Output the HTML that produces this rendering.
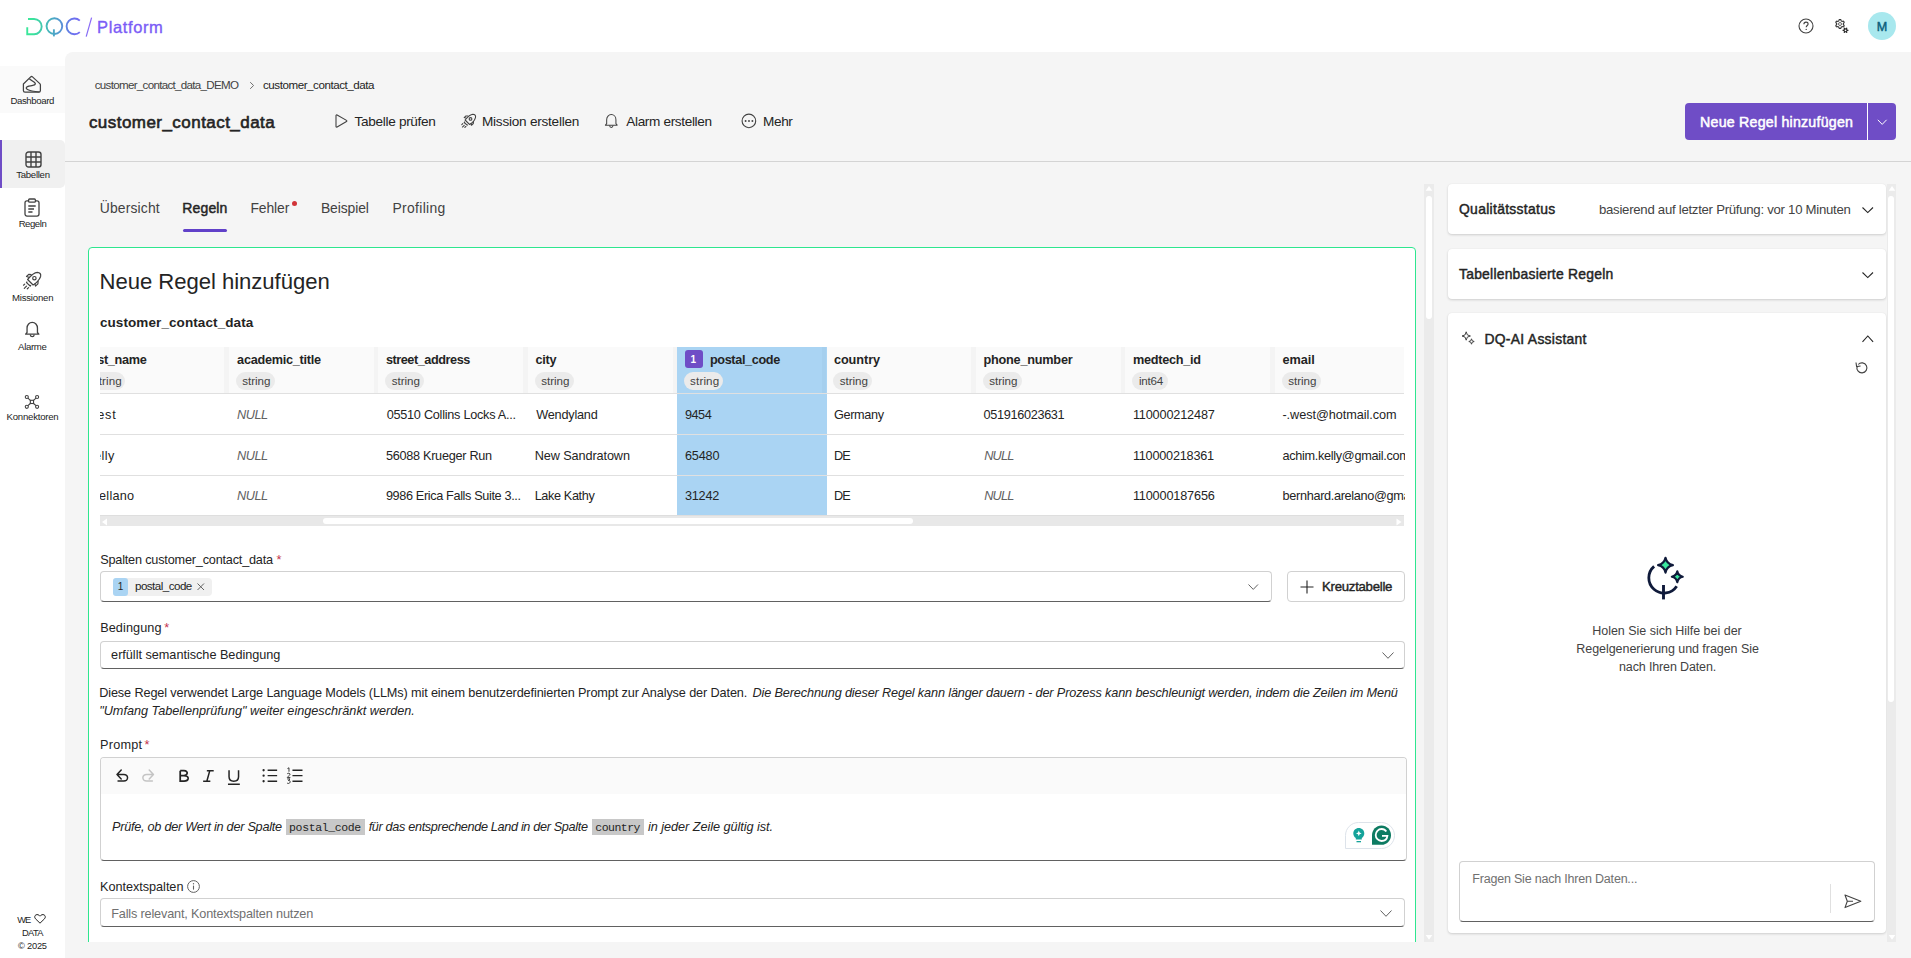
<!DOCTYPE html>
<html><head><meta charset="utf-8">
<style>
html,body{margin:0;padding:0;width:1911px;height:958px;overflow:hidden;background:#fff;font-family:"Liberation Sans", sans-serif;}
.t{position:absolute;white-space:nowrap;line-height:1;}
svg{overflow:visible}
</style></head><body>
<div style="position:absolute;left:0px;top:0px;width:1911px;height:52px;background:#fff;"></div>
<svg style="position:absolute;left:26px;top:17px;" width="140" height="22" viewBox="0 0 140 22" fill="none">
<defs><linearGradient id="lg" x1="0" y1="0" x2="70" y2="0" gradientUnits="userSpaceOnUse">
<stop offset="0.08" stop-color="#3ae69a"/><stop offset="0.4" stop-color="#4ca6c6"/><stop offset="0.68" stop-color="#6b70ef"/><stop offset="0.92" stop-color="#8a69f6"/></linearGradient></defs>
<g stroke="url(#lg)" stroke-width="1.9" fill="none">
<path d="M2 1.95 H8.05 A7.62 7.62 0 0 1 8.05 17.2 H1.25 V10.2"/>
<circle cx="28.4" cy="9.1" r="7.85"/>
<path d="M27.9 12.3 V19.4"/>
<path d="M53.8 3.6 A7.85 7.85 0 1 0 53.8 15.1"/>
<path d="M65.6 0.6 L60.2 19.7" stroke-width="1.2"/>
</g></svg>
<svg style="position:absolute;left:1798px;top:18px;" width="16" height="16" viewBox="0 0 16 16" fill="none"><circle cx="8" cy="8" r="7" stroke="#424242" stroke-width="1.1"/><path d="M5.9 6.2 C5.9 4.9 6.9 4.1 8 4.1 C9.2 4.1 10.1 4.9 10.1 6 C10.1 7.4 8.2 7.6 8.2 9.3" stroke="#424242" stroke-width="1.1"/><circle cx="8.2" cy="11.4" r="0.7" fill="#424242"/></svg>
<svg style="position:absolute;left:1834px;top:17.8px;" width="16" height="17" viewBox="0 0 16 17" fill="none"><path d="M9.30 6.00 L9.30 6.09 L9.30 6.17 L9.31 6.26 L9.31 6.35 L9.33 6.44 L9.36 6.53 L9.42 6.63 L9.50 6.74 L9.62 6.87 L9.77 7.01 L9.91 7.16 L10.01 7.30 L10.08 7.44 L10.11 7.58 L10.10 7.70 L10.08 7.82 L10.05 7.93 L10.00 8.04 L9.95 8.15 L9.90 8.25 L9.84 8.35 L9.77 8.45 L9.70 8.54 L9.61 8.63 L9.52 8.70 L9.42 8.77 L9.29 8.81 L9.14 8.82 L8.96 8.80 L8.76 8.76 L8.56 8.70 L8.40 8.66 L8.26 8.64 L8.14 8.64 L8.04 8.66 L7.96 8.70 L7.88 8.73 L7.80 8.77 L7.73 8.81 L7.65 8.86 L7.58 8.90 L7.50 8.95 L7.43 8.99 L7.36 9.04 L7.29 9.10 L7.22 9.18 L7.16 9.27 L7.11 9.40 L7.06 9.57 L7.01 9.77 L6.95 9.96 L6.88 10.13 L6.79 10.25 L6.69 10.34 L6.58 10.40 L6.47 10.44 L6.35 10.47 L6.24 10.49 L6.12 10.50 L6.00 10.50 L5.88 10.50 L5.76 10.49 L5.65 10.47 L5.53 10.44 L5.42 10.40 L5.31 10.34 L5.21 10.25 L5.12 10.13 L5.05 9.96 L4.99 9.77 L4.94 9.57 L4.89 9.40 L4.84 9.27 L4.78 9.18 L4.71 9.10 L4.64 9.04 L4.57 8.99 L4.50 8.95 L4.42 8.90 L4.35 8.86 L4.27 8.81 L4.20 8.77 L4.12 8.73 L4.04 8.70 L3.96 8.66 L3.86 8.64 L3.74 8.64 L3.60 8.66 L3.44 8.70 L3.24 8.76 L3.04 8.80 L2.86 8.82 L2.71 8.81 L2.58 8.77 L2.48 8.70 L2.39 8.63 L2.30 8.54 L2.23 8.45 L2.16 8.35 L2.10 8.25 L2.05 8.15 L2.00 8.04 L1.95 7.93 L1.92 7.82 L1.90 7.70 L1.89 7.58 L1.92 7.44 L1.99 7.30 L2.09 7.16 L2.23 7.01 L2.38 6.87 L2.50 6.74 L2.58 6.63 L2.64 6.53 L2.67 6.44 L2.69 6.35 L2.69 6.26 L2.70 6.17 L2.70 6.09 L2.70 6.00 L2.70 5.91 L2.70 5.83 L2.69 5.74 L2.69 5.65 L2.67 5.56 L2.64 5.47 L2.58 5.37 L2.50 5.26 L2.38 5.13 L2.23 4.99 L2.09 4.84 L1.99 4.70 L1.92 4.56 L1.89 4.42 L1.90 4.30 L1.92 4.18 L1.95 4.07 L2.00 3.96 L2.05 3.85 L2.10 3.75 L2.16 3.65 L2.23 3.55 L2.30 3.46 L2.39 3.37 L2.48 3.30 L2.58 3.23 L2.71 3.19 L2.86 3.18 L3.04 3.20 L3.24 3.24 L3.44 3.30 L3.60 3.34 L3.74 3.36 L3.86 3.36 L3.96 3.34 L4.04 3.30 L4.12 3.27 L4.20 3.23 L4.27 3.19 L4.35 3.14 L4.42 3.10 L4.50 3.05 L4.57 3.01 L4.64 2.96 L4.71 2.90 L4.78 2.82 L4.84 2.73 L4.89 2.60 L4.94 2.43 L4.99 2.23 L5.05 2.04 L5.12 1.87 L5.21 1.75 L5.31 1.66 L5.42 1.60 L5.53 1.56 L5.65 1.53 L5.76 1.51 L5.88 1.50 L6.00 1.50 L6.12 1.50 L6.24 1.51 L6.35 1.53 L6.47 1.56 L6.58 1.60 L6.69 1.66 L6.79 1.75 L6.88 1.87 L6.95 2.04 L7.01 2.23 L7.06 2.43 L7.11 2.60 L7.16 2.73 L7.22 2.82 L7.29 2.90 L7.36 2.96 L7.43 3.01 L7.50 3.05 L7.58 3.10 L7.65 3.14 L7.73 3.19 L7.80 3.23 L7.88 3.27 L7.96 3.30 L8.04 3.34 L8.14 3.36 L8.26 3.36 L8.40 3.34 L8.56 3.30 L8.76 3.24 L8.96 3.20 L9.14 3.18 L9.29 3.19 L9.42 3.23 L9.52 3.30 L9.61 3.37 L9.70 3.46 L9.77 3.55 L9.84 3.65 L9.90 3.75 L9.95 3.85 L10.00 3.96 L10.05 4.07 L10.08 4.18 L10.10 4.30 L10.11 4.42 L10.08 4.56 L10.01 4.70 L9.91 4.84 L9.77 4.99 L9.62 5.13 L9.50 5.26 L9.42 5.37 L9.36 5.47 L9.33 5.56 L9.31 5.65 L9.31 5.74 L9.30 5.83 L9.30 5.91 Z" stroke="#333" stroke-width="1.15" stroke-linejoin="round"/><circle cx="6" cy="6" r="1.5" stroke="#555" stroke-width="0.9"/><path d="M14.50 12.30 L14.50 12.38 L14.49 12.46 L14.48 12.53 L14.47 12.61 L14.44 12.69 L14.40 12.76 L14.34 12.83 L14.24 12.88 L14.10 12.92 L13.91 12.95 L13.73 12.96 L13.59 12.98 L13.49 13.00 L13.42 13.04 L13.38 13.08 L13.34 13.12 L13.31 13.16 L13.28 13.21 L13.26 13.25 L13.23 13.30 L13.21 13.35 L13.18 13.39 L13.15 13.44 L13.13 13.48 L13.11 13.54 L13.10 13.60 L13.10 13.67 L13.13 13.77 L13.19 13.90 L13.27 14.07 L13.34 14.24 L13.38 14.38 L13.38 14.50 L13.35 14.59 L13.31 14.66 L13.25 14.71 L13.19 14.77 L13.13 14.81 L13.07 14.86 L13.00 14.90 L12.93 14.94 L12.86 14.97 L12.79 15.00 L12.71 15.03 L12.64 15.04 L12.55 15.05 L12.46 15.02 L12.37 14.97 L12.26 14.86 L12.15 14.71 L12.04 14.57 L11.96 14.45 L11.88 14.37 L11.82 14.33 L11.77 14.31 L11.71 14.30 L11.66 14.30 L11.60 14.30 L11.55 14.30 L11.50 14.30 L11.45 14.30 L11.40 14.30 L11.34 14.30 L11.29 14.30 L11.23 14.31 L11.18 14.33 L11.12 14.37 L11.04 14.45 L10.96 14.57 L10.85 14.71 L10.74 14.86 L10.63 14.97 L10.54 15.02 L10.45 15.05 L10.36 15.04 L10.29 15.03 L10.21 15.00 L10.14 14.97 L10.07 14.94 L10.00 14.90 L9.93 14.86 L9.87 14.81 L9.81 14.77 L9.75 14.71 L9.69 14.66 L9.65 14.59 L9.62 14.50 L9.62 14.38 L9.66 14.24 L9.73 14.07 L9.81 13.90 L9.87 13.77 L9.90 13.67 L9.90 13.60 L9.89 13.54 L9.87 13.48 L9.85 13.44 L9.82 13.39 L9.79 13.35 L9.77 13.30 L9.74 13.25 L9.72 13.21 L9.69 13.16 L9.66 13.12 L9.62 13.08 L9.58 13.04 L9.51 13.00 L9.41 12.98 L9.27 12.96 L9.09 12.95 L8.90 12.92 L8.76 12.88 L8.66 12.83 L8.60 12.76 L8.56 12.69 L8.53 12.61 L8.52 12.53 L8.51 12.46 L8.50 12.38 L8.50 12.30 L8.50 12.22 L8.51 12.14 L8.52 12.07 L8.53 11.99 L8.56 11.91 L8.60 11.84 L8.66 11.77 L8.76 11.72 L8.90 11.68 L9.09 11.65 L9.27 11.64 L9.41 11.62 L9.51 11.60 L9.58 11.56 L9.62 11.52 L9.66 11.48 L9.69 11.44 L9.72 11.39 L9.74 11.35 L9.77 11.30 L9.79 11.25 L9.82 11.21 L9.85 11.16 L9.87 11.12 L9.89 11.06 L9.90 11.00 L9.90 10.93 L9.87 10.83 L9.81 10.70 L9.73 10.53 L9.66 10.36 L9.62 10.22 L9.62 10.10 L9.65 10.01 L9.69 9.94 L9.75 9.89 L9.81 9.83 L9.87 9.79 L9.93 9.74 L10.00 9.70 L10.07 9.66 L10.14 9.63 L10.21 9.60 L10.29 9.57 L10.36 9.56 L10.45 9.55 L10.54 9.58 L10.63 9.63 L10.74 9.74 L10.85 9.89 L10.96 10.03 L11.04 10.15 L11.12 10.23 L11.18 10.27 L11.23 10.29 L11.29 10.30 L11.34 10.30 L11.40 10.30 L11.45 10.30 L11.50 10.30 L11.55 10.30 L11.60 10.30 L11.66 10.30 L11.71 10.30 L11.77 10.29 L11.82 10.27 L11.88 10.23 L11.96 10.15 L12.04 10.03 L12.15 9.89 L12.26 9.74 L12.37 9.63 L12.46 9.58 L12.55 9.55 L12.64 9.56 L12.71 9.57 L12.79 9.60 L12.86 9.63 L12.93 9.66 L13.00 9.70 L13.07 9.74 L13.13 9.79 L13.19 9.83 L13.25 9.89 L13.31 9.94 L13.35 10.01 L13.38 10.10 L13.38 10.22 L13.34 10.36 L13.27 10.53 L13.19 10.70 L13.13 10.83 L13.10 10.93 L13.10 11.00 L13.11 11.06 L13.13 11.12 L13.15 11.16 L13.18 11.21 L13.21 11.25 L13.23 11.30 L13.26 11.35 L13.28 11.39 L13.31 11.44 L13.34 11.48 L13.38 11.52 L13.42 11.56 L13.49 11.60 L13.59 11.62 L13.73 11.64 L13.91 11.65 L14.10 11.68 L14.24 11.72 L14.34 11.77 L14.40 11.84 L14.44 11.91 L14.47 11.99 L14.48 12.07 L14.49 12.14 L14.50 12.22 Z" fill="#2a2a2a"/><circle cx="11.5" cy="12.3" r="0.85" fill="#fff"/></svg>
<svg style="position:absolute;left:1868px;top:12px;" width="28" height="28" viewBox="0 0 28 28" fill="none"><circle cx="14" cy="14" r="14" fill="#a8e8ee"/></svg>
<div style="position:absolute;left:0px;top:52px;width:65px;height:906px;background:#fff;"></div>
<div style="position:absolute;left:0px;top:66px;width:65px;height:47px;background:#fafafa;"></div>
<div style="position:absolute;left:0px;top:140px;width:65px;height:47.5px;background:#f0f0f0;border-radius:0 5px 5px 0"></div>
<div style="position:absolute;left:0px;top:140px;width:2px;height:47.5px;background:#6f4dc6;"></div>
<svg style="position:absolute;left:22px;top:75px;" width="20" height="19" viewBox="0 0 20 19" fill="none"><path d="M1.4 9 L8.7 1.9 Q9.6 1.1 10.5 1.9 L17.8 8.6 Q18.4 9.2 18.4 10 V15.6 Q18.4 17.2 16.8 17.2 H3 Q1.4 17.2 1.4 15.6 Z" stroke="#424242" stroke-width="1.25" stroke-linejoin="round"/><path d="M7.4 3.8 C9 5.5 11.5 6.5 13 8 C13.8 8.9 13 10 11.5 10.2 C9 10.6 6 11 4.8 12 C3.8 12.8 4.2 13.8 5.5 14.5 C8 16 13 16.6 17.6 17" stroke="#424242" stroke-width="1.25"/></svg>
<svg style="position:absolute;left:24.5px;top:150.5px;" width="17" height="17" viewBox="0 0 17 17" fill="none"><rect x="1" y="1" width="15" height="15" rx="2.5" stroke="#424242" stroke-width="1.4"/><path d="M6 1 V16 M11 1 V16 M1 6 H16 M1 11 H16" stroke="#424242" stroke-width="1.4"/></svg>
<svg style="position:absolute;left:24px;top:198px;" width="16" height="19" viewBox="0 0 16 19" fill="none"><rect x="1" y="2.8" width="14" height="15.3" rx="2" stroke="#424242" stroke-width="1.3"/><rect x="4.6" y="1" width="6.8" height="3.2" rx="1" stroke="#424242" stroke-width="1.3" fill="#fff"/><path d="M4.3 8 H11.7 M4.3 11 H10 M4.3 14 H8.5" stroke="#424242" stroke-width="1.3"/></svg>
<svg style="position:absolute;left:20px;top:267px;" width="25" height="25" viewBox="0 0 25 25" fill="none"><path d="M7.6 12.5 L13.1 18 C15.5 16.8 19.5 13 20.6 9.5 C21.2 7 19.8 5.4 17.3 5.3 C14.5 5.4 10.2 9.3 7.6 12.5 Z" stroke="#424242" stroke-width="1.2" stroke-linejoin="round"/><circle cx="14.4" cy="11.2" r="1.7" stroke="#424242" stroke-width="1.2"/><path d="M9.3 10.4 L6.5 9.5 L8.7 7.4 L11.6 7.6 M14.8 16.4 L15.5 19.1 L17.9 16.9 L18.1 14" stroke="#424242" stroke-width="1.2" stroke-linejoin="round"/><path d="M7.2 14.6 L6.5 15.6 L10.2 19 L11 18.2" stroke="#424242" stroke-width="1.2" stroke-linejoin="round"/><path d="M3.5 18.2 L4.7 17.1 M4.3 21.3 L6.5 19.1 M7.3 21.8 L8.6 20.6" stroke="#424242" stroke-width="1.2" stroke-linecap="round"/></svg>
<svg style="position:absolute;left:23.8px;top:321px;" width="16.5" height="17" viewBox="0 0 16.4 17" fill="none"><path d="M3 11.5 V7 C3 3.8 5.3 1.3 8.2 1.3 C11.1 1.3 13.4 3.8 13.4 7 V11.5 L14.8 13.2 H1.6 Z" stroke="#424242" stroke-width="1.3" stroke-linejoin="round"/><path d="M6.2 13.6 C6.4 15 7.2 15.7 8.2 15.7 C9.2 15.7 10 15 10.2 13.6" stroke="#424242" stroke-width="1.3"/></svg>
<svg style="position:absolute;left:20px;top:390px;" width="24" height="22" viewBox="0 0 24 22" fill="none"><circle cx="6.8" cy="7" r="1.55" stroke="#424242" stroke-width="1.1"/><circle cx="17.1" cy="7" r="1.55" stroke="#424242" stroke-width="1.1"/><circle cx="6.8" cy="16.8" r="1.55" stroke="#424242" stroke-width="1.1"/><circle cx="17.1" cy="16.8" r="1.55" stroke="#424242" stroke-width="1.1"/><rect x="10.35" y="10.3" width="3.2" height="3.2" stroke="#424242" stroke-width="1.1"/><path d="M7.9 8.1 L10.35 10.3 M16 8.1 L13.55 10.3 M7.9 15.7 L10.35 13.5 M16 15.7 L13.55 13.5" stroke="#424242" stroke-width="1.1"/></svg>
<svg style="position:absolute;left:33.5px;top:914px;" width="12" height="10" viewBox="0 0 12 10" fill="none"><path d="M6 9.2 L1.5 4.8 C0.3 3.6 0.5 1.6 1.9 0.9 C3.3 0.2 4.9 0.7 6 2.2 C7.1 0.7 8.7 0.2 10.1 0.9 C11.5 1.6 11.7 3.6 10.5 4.8 Z" stroke="#242424" stroke-width="1"/></svg>
<div style="position:absolute;left:65px;top:52px;width:1846px;height:906px;background:#f5f5f5;border-top-left-radius:8px"></div>
<svg style="position:absolute;left:249px;top:81px;" width="6" height="9" viewBox="0 0 6 9" fill="none"><path d="M1.2 1.2 L4.6 4.5 L1.2 7.8" stroke="#707070" stroke-width="1"/></svg>
<svg style="position:absolute;left:334px;top:114px;" width="14" height="14" viewBox="0 0 14 14" fill="none"><path d="M2 1.6 V12.4 C2 13 2.6 13.3 3.1 13 L12.5 7.6 C13 7.3 13 6.7 12.5 6.4 L3.1 1 C2.6 0.7 2 1 2 1.6 Z" stroke="#424242" stroke-width="1.1"/></svg>
<svg style="position:absolute;left:458.8px;top:110px;" width="20" height="20" viewBox="0 0 25 25" fill="none"><path d="M7.6 12.5 L13.1 18 C15.5 16.8 19.5 13 20.6 9.5 C21.2 7 19.8 5.4 17.3 5.3 C14.5 5.4 10.2 9.3 7.6 12.5 Z" stroke="#424242" stroke-width="1.35" stroke-linejoin="round"/><circle cx="14.4" cy="11.2" r="1.7" stroke="#424242" stroke-width="1.35"/><path d="M9.3 10.4 L6.5 9.5 L8.7 7.4 L11.6 7.6 M14.8 16.4 L15.5 19.1 L17.9 16.9 L18.1 14" stroke="#424242" stroke-width="1.35" stroke-linejoin="round"/><path d="M7.2 14.6 L6.5 15.6 L10.2 19 L11 18.2" stroke="#424242" stroke-width="1.35" stroke-linejoin="round"/><path d="M3.5 18.2 L4.7 17.1 M4.3 21.3 L6.5 19.1 M7.3 21.8 L8.6 20.6" stroke="#424242" stroke-width="1.35" stroke-linecap="round"/></svg>
<svg style="position:absolute;left:603.6px;top:112.6px;" width="14.6" height="16" viewBox="0 0 16.4 17" fill="none"><path d="M3 11.5 V7 C3 3.8 5.3 1.3 8.2 1.3 C11.1 1.3 13.4 3.8 13.4 7 V11.5 L14.8 13.2 H1.6 Z" stroke="#424242" stroke-width="1.15" stroke-linejoin="round"/><path d="M6.2 13.6 C6.4 15 7.2 15.7 8.2 15.7 C9.2 15.7 10 15 10.2 13.6" stroke="#424242" stroke-width="1.15"/></svg>
<svg style="position:absolute;left:741px;top:113px;" width="16" height="16" viewBox="0 0 16 16" fill="none"><circle cx="7.9" cy="7.9" r="6.8" stroke="#424242" stroke-width="1.1"/><circle cx="4.6" cy="8" r="0.95" fill="#424242"/><circle cx="8" cy="8" r="0.95" fill="#424242"/><circle cx="11.4" cy="8" r="0.95" fill="#424242"/></svg>
<div style="position:absolute;left:1685px;top:103px;width:211px;height:37px;background:#6f4dc6;border-radius:4px"></div>
<div style="position:absolute;left:1867px;top:103px;width:1px;height:37px;background:#fff;"></div>
<svg style="position:absolute;left:1877px;top:119px;" width="11" height="7" viewBox="0 0 11 7" fill="none"><path d="M0.8 0.8 L5.2 5.4 L9.6 0.8" stroke="#fff" stroke-width="1"/></svg>
<div style="position:absolute;left:65px;top:161px;width:1846px;height:1px;background:#d4d4d4;"></div>
<div style="position:absolute;left:291.8px;top:200.8px;width:5.4px;height:5.4px;border-radius:50%;background:#d13438"></div>
<div style="position:absolute;left:182.8px;top:229px;width:44.2px;height:3px;background:#6141c9;border-radius:2px"></div>
<div style="position:absolute;left:88px;top:247px;width:1328px;height:695px;overflow:hidden;z-index:1"><div style="position:absolute;left:0;top:0;width:1328px;height:760px;box-sizing:border-box;border:1px solid #2ee68f;border-radius:4px;background:#fff"></div></div>
<div style="position:absolute;left:100px;top:347px;width:1304px;height:180px;overflow:hidden;z-index:2"><div style="position:absolute;left:0px;top:0px;width:1304px;height:46px;background:#fafafa;"></div><div style="position:absolute;left:577px;top:0px;width:150px;height:168.5px;background:#aad4f3;"></div><div style="position:absolute;left:124.30000000000001px;top:0px;width:4.5px;height:46px;background:#f4f4f4;"></div><div style="position:absolute;left:273.7px;top:0px;width:4.5px;height:46px;background:#f4f4f4;"></div><div style="position:absolute;left:423.1px;top:0px;width:4.5px;height:46px;background:#f4f4f4;"></div><div style="position:absolute;left:572.5px;top:0px;width:4.5px;height:46px;background:#f4f4f4;"></div><div style="position:absolute;left:721.7px;top:0px;width:4.5px;height:46px;background:#a5cfee;"></div><div style="position:absolute;left:871.1px;top:0px;width:4.5px;height:46px;background:#f4f4f4;"></div><div style="position:absolute;left:1020.7px;top:0px;width:4.5px;height:46px;background:#f4f4f4;"></div><div style="position:absolute;left:1170.1px;top:0px;width:4.5px;height:46px;background:#f4f4f4;"></div><div style="position:absolute;left:0px;top:46px;width:1304px;height:1px;background:#e0e0e0;"></div><div style="position:absolute;left:0px;top:87.19999999999999px;width:1304px;height:1px;background:#e0e0e0;"></div><div style="position:absolute;left:0px;top:128px;width:1304px;height:1px;background:#e0e0e0;"></div><div style="position:absolute;left:0px;top:168.29999999999995px;width:1304px;height:11px;background:#e8e8e8;"></div><div style="position:absolute;left:0px;top:168.29999999999995px;width:1304px;height:1px;background:#dedede;"></div><div style="position:absolute;left:222.8px;top:171.29999999999995px;width:590px;height:6px;background:#fff;border-radius:3px"></div><svg style="position:absolute;left:1px;top:171px" width="8" height="8"><path d="M6 0.5 V7.5 L1 4 Z" fill="#fff"/></svg><svg style="position:absolute;left:1295px;top:171px" width="8" height="8"><path d="M1.5 0.5 V7.5 L6.5 4 Z" fill="#fff"/></svg><div style="position:absolute;left:-13.599999999999994px;top:25.19999999999999px;width:39px;height:17.5px;background:#ebebeb;border-radius:9px"></div><div style="position:absolute;left:136.0px;top:25.19999999999999px;width:39px;height:17.5px;background:#ebebeb;border-radius:9px"></div><div style="position:absolute;left:285.4px;top:25.19999999999999px;width:39px;height:17.5px;background:#ebebeb;border-radius:9px"></div><div style="position:absolute;left:434.80000000000007px;top:25.19999999999999px;width:39px;height:17.5px;background:#ebebeb;border-radius:9px"></div><div style="position:absolute;left:584.2px;top:25.19999999999999px;width:39px;height:17.5px;background:#ebebeb;border-radius:9px"></div><div style="position:absolute;left:733.4000000000001px;top:25.19999999999999px;width:39px;height:17.5px;background:#ebebeb;border-radius:9px"></div><div style="position:absolute;left:882.8000000000001px;top:25.19999999999999px;width:39px;height:17.5px;background:#ebebeb;border-radius:9px"></div><div style="position:absolute;left:1032.4px;top:25.19999999999999px;width:35.4px;height:17.5px;background:#ebebeb;border-radius:9px"></div><div style="position:absolute;left:1181.8px;top:25.19999999999999px;width:39px;height:17.5px;background:#ebebeb;border-radius:9px"></div><div style="position:absolute;left:584.9px;top:3px;width:18px;height:18px;background:#6f4dc6;border-radius:3px"></div></div>
<div style="position:absolute;left:100px;top:571.2px;width:1172px;height:30.5px;box-sizing:border-box;border:1px solid #d1d1d1;border-bottom-color:#616161;border-radius:4px;background:#fff;z-index:2;"></div>
<div style="position:absolute;left:112.8px;top:578.3px;width:98.8px;height:17.3px;background:#f0f0f0;border-radius:4px;z-index:3"></div>
<div style="position:absolute;left:112.8px;top:578.3px;width:15px;height:17.3px;background:#aad4f3;border-radius:3px;z-index:3"></div>
<svg style="position:absolute;left:197px;top:583px;z-index:4" width="8" height="8" viewBox="0 0 8 8" fill="none"><path d="M0.5 0.5 L7 7 M7 0.5 L0.5 7" stroke="#616161" stroke-width="1"/></svg>
<svg style="position:absolute;left:1248.2px;top:584px;z-index:3" width="10.5" height="6.6" viewBox="0 0 10.5 6.6" fill="none"><path d="M0.5 0.5 L5.25 5.3999999999999995 L10.0 0.5" stroke="#616161" stroke-width="1"/></svg>
<div style="position:absolute;left:1287px;top:571px;width:118px;height:30.5px;box-sizing:border-box;border:1px solid #d1d1d1;border-bottom-color:#d1d1d1;border-radius:4px;background:#fff;z-index:2;"></div>
<svg style="position:absolute;left:1300px;top:580px;z-index:3" width="14" height="14" viewBox="0 0 14 14" fill="none"><path d="M7 0.5 V13.5 M0.5 7 H13.5" stroke="#242424" stroke-width="1.1"/></svg>
<div style="position:absolute;left:100px;top:640.5px;width:1305px;height:28px;box-sizing:border-box;border:1px solid #d1d1d1;border-bottom-color:#616161;border-radius:4px;background:#fff;z-index:2;"></div>
<svg style="position:absolute;left:1381.5px;top:651.5px;z-index:3" width="12" height="7.5" viewBox="0 0 12 7.5" fill="none"><path d="M0.5 0.5 L6.0 6.3 L11.5 0.5" stroke="#616161" stroke-width="1"/></svg>
<div style="position:absolute;left:100px;top:757px;width:1306.5px;height:103.5px;box-sizing:border-box;border:1px solid #d1d1d1;border-bottom-color:#616161;border-radius:4px;background:#fff;z-index:2;"></div>
<div style="position:absolute;left:101px;top:758px;width:1304.5px;height:36px;background:#fafafa;border-radius:3px 3px 0 0;z-index:3"></div>
<svg style="position:absolute;left:108px;top:762px;z-index:4" width="202" height="28" viewBox="0 0 202 28" fill="none">
<path d="M8.99 12.47 L13.21 7.93 M8.99 12.47 L13.21 16.91 M8.99 12.47 H15.86 A3.7 3.28 0 0 1 15.86 19.03 H10.04" stroke="#242424" stroke-width="1.5" stroke-linejoin="round" stroke-linecap="round"/>
<path d="M45.45 12.47 L41.23 7.93 M45.45 12.47 L41.23 16.91 M45.45 12.47 H38.58 A3.7 3.28 0 0 0 38.58 19.03 H44.4" stroke="#c4c4c4" stroke-width="1.5" stroke-linejoin="round" stroke-linecap="round"/>
<path d="M72.2 8.67 H75.9 C78.75 8.67 79.49 10.57 79.07 11.84 C78.65 13.11 77.17 13.53 75.9 13.53 H72.2 M75.9 13.53 C78.75 13.53 80.34 14.8 80.13 16.7 C79.81 18.6 78.22 19.24 76.11 19.24 H72.2 V8.67" stroke="#242424" stroke-width="1.75"/>
<path d="M98.84 8.67 H105.71 M95.14 19.24 H102.33 M101.8 8.67 L98.84 19.24" stroke="#242424" stroke-width="1.5"/>
<path d="M121.04 8.25 V14.8 C121.04 17.76 122.83 19.24 125.79 19.24 C128.75 19.24 130.55 17.76 130.55 14.8 V8.25 M119.98 22.2 H131.82" stroke="#242424" stroke-width="1.5"/>
<circle cx="155.6" cy="8.25" r="1.15" fill="#242424"/><circle cx="155.6" cy="13.64" r="1.15" fill="#242424"/><circle cx="155.6" cy="19.24" r="1.15" fill="#242424"/>
<path d="M159.62 8.25 H169.13 M159.62 13.64 H169.13 M159.62 19.24 H169.13" stroke="#242424" stroke-width="1.4"/>
<path d="M184.46 8.25 H194.5 M184.46 13.64 H194.5 M184.46 19.24 H194.5" stroke="#242424" stroke-width="1.4"/>
<path d="M179.49 6.55 L180.97 5.81 V9.73" stroke="#242424" stroke-width="0.9"/>
<path d="M179.18 11.84 C179.7 10.99 182.03 10.99 182.03 12.26 C182.03 13.32 179.28 14.8 179.28 15.43 H182.35" stroke="#242424" stroke-width="0.9"/>
<path d="M179.18 16.91 H182.03 L180.34 18.5 C182.03 18.18 182.35 19.24 182.03 20.3 C181.61 21.67 179.7 21.78 179.07 20.93" stroke="#242424" stroke-width="0.9"/>
</svg>
<div style="position:absolute;left:285.9px;top:819px;width:78.9px;height:15.7px;background:#c8c8c8;z-index:3"></div>
<div style="position:absolute;left:592px;top:819px;width:52.3px;height:15.7px;background:#c8c8c8;z-index:3"></div>
<svg style="position:absolute;left:1345px;top:822px;z-index:4" width="50" height="27" viewBox="0 0 50 27" fill="none"><path d="M13.5 0.5 H36.5 C43.5 0.5 49.5 6.3 49.5 13.5 C49.5 20.7 43.5 26.5 36.5 26.5 H0.5 V13.5 C0.5 6.3 6.3 0.5 13.5 0.5 Z" fill="#fff" stroke="#dde3ea" stroke-width="1"/>
<path d="M13.8 6 C10.7 6 8.3 8.4 8.3 11.4 C8.3 13.3 9.3 14.9 10.8 15.9 V17.6 H16.8 V15.9 C18.3 14.9 19.3 13.3 19.3 11.4 C19.3 8.4 16.9 6 13.8 6 Z" fill="#15a39a"/>
<path d="M11.5 19 H16 V20.3 H11.5 Z" fill="#15a39a"/>
<path d="M13.8 8.6 L14.6 10.6 L16.6 11.4 L14.6 12.2 L13.8 14.2 L13 12.2 L11 11.4 L13 10.6 Z" fill="#fff"/>
<path d="M36.5 3.5 C41.8 3.5 46 7.8 46 13.2 C46 18.5 41.8 22.8 36.5 22.8 H27 V13.2 C27 7.8 31.2 3.5 36.5 3.5 Z" fill="#0d7b62"/>
<path d="M41.3 9.6 C40.3 8 38.6 7 36.6 7 C33.3 7 30.7 9.7 30.7 13 C30.7 16.3 33.3 19 36.6 19 C39.6 19 42 16.9 42.4 13.9 H37" stroke="#fff" stroke-width="1.8"/></svg>
<svg style="position:absolute;left:186.5px;top:879.5px;z-index:3" width="13" height="13" viewBox="0 0 13 13" fill="none"><circle cx="6.5" cy="6.5" r="5.9" stroke="#616161" stroke-width="1"/><path d="M6.5 5.6 V9.6" stroke="#616161" stroke-width="1.1"/><circle cx="6.5" cy="3.7" r="0.7" fill="#616161"/></svg>
<div style="position:absolute;left:100px;top:898px;width:1305px;height:28.5px;box-sizing:border-box;border:1px solid #d1d1d1;border-bottom-color:#616161;border-radius:4px;background:#fff;z-index:2;"></div>
<svg style="position:absolute;left:1380px;top:910px;z-index:3" width="12" height="7.5" viewBox="0 0 12 7.5" fill="none"><path d="M0.5 0.5 L6.0 6.3 L11.5 0.5" stroke="#616161" stroke-width="1"/></svg>
<div style="position:absolute;left:1424.3px;top:184px;width:9.5px;height:758px;background:#ebebeb;"></div>
<div style="position:absolute;left:1425.8px;top:195.8px;width:6.4px;height:123px;background:#fff;border-radius:3px"></div>
<svg style="position:absolute;left:1425px;top:185px;" width="8" height="7" viewBox="0 0 8 7" fill="none"><path d="M4 1 L7.3 5.8 H0.7 Z" fill="#fff"/></svg>
<svg style="position:absolute;left:1425px;top:934px;" width="8" height="7" viewBox="0 0 8 7" fill="none"><path d="M0.7 1 H7.3 L4 5.8 Z" fill="#fff"/></svg>
<div style="position:absolute;left:1448px;top:184.2px;width:438px;height:49.8px;background:#fff;border-radius:4px;box-shadow:0 1px 2.5px rgba(0,0,0,0.16), 0 0 1px rgba(0,0,0,0.06)"></div>
<svg style="position:absolute;left:1861.5px;top:206.5px;z-index:3" width="11.5" height="6.8" viewBox="0 0 11.5 6.8" fill="none"><path d="M0.5 0.5 L5.75 5.6 L11.0 0.5" stroke="#242424" stroke-width="1.1"/></svg>
<div style="position:absolute;left:1448px;top:248.5px;width:438px;height:50.3px;background:#fff;border-radius:4px;box-shadow:0 1px 2.5px rgba(0,0,0,0.16), 0 0 1px rgba(0,0,0,0.06)"></div>
<svg style="position:absolute;left:1861.5px;top:271.5px;z-index:3" width="11.5" height="6.8" viewBox="0 0 11.5 6.8" fill="none"><path d="M0.5 0.5 L5.75 5.6 L11.0 0.5" stroke="#242424" stroke-width="1.1"/></svg>
<div style="position:absolute;left:1448px;top:312.6px;width:438px;height:620.6px;background:#fff;border-radius:4px;box-shadow:0 1px 2.5px rgba(0,0,0,0.16), 0 0 1px rgba(0,0,0,0.06)"></div>
<svg style="position:absolute;left:1460px;top:330px;" width="16" height="16" viewBox="0 0 16 16" fill="none"><path d="M6.20 1.80 Q6.37 5.83 10.40 6.00 Q6.37 6.17 6.20 10.20 Q6.03 6.17 2.00 6.00 Q6.03 5.83 6.20 1.80 Z" stroke="#424242" stroke-width="1" stroke-linejoin="round"/><path d="M11.50 8.80 Q11.61 11.39 14.20 11.50 Q11.61 11.61 11.50 14.20 Q11.39 11.61 8.80 11.50 Q11.39 11.39 11.50 8.80 Z" stroke="#424242" stroke-width="1" stroke-linejoin="round"/></svg>
<svg style="position:absolute;left:1861.5px;top:334.5px;" width="12" height="8" viewBox="0 0 12 8" fill="none"><path d="M0.5 6.8 L5.8 1 L11.1 6.8" stroke="#242424" stroke-width="1.1"/></svg>
<svg style="position:absolute;left:1854px;top:360.5px;" width="14" height="14" viewBox="0 0 14 14" fill="none"><path d="M3.2 5.2 A5 5 0 1 0 4.2 3.5" stroke="#424242" stroke-width="1.1"/><path d="M2 1.5 L2.6 5.6 L6.6 5" stroke="#424242" stroke-width="1.1"/></svg>
<svg style="position:absolute;left:1640px;top:550px;" width="50" height="55" viewBox="0 0 50 55" fill="none"><path d="M14.1 16.4 A15.2 15.2 0 1 0 36.7 36.3" stroke="#0f1a3a" stroke-width="2.8" fill="none"/>
<path d="M23.5 35 V49.4" stroke="#0f1a3a" stroke-width="2.9"/>
<path d="M25.5 7.799999999999999 Q26.758 13.941999999999998 32.9 15.2 Q26.758 16.458 25.5 22.6 Q24.242 16.458 18.1 15.2 Q24.242 13.941999999999998 25.5 7.799999999999999 Z" fill="#3be89f" stroke="#0f1a3a" stroke-width="2.2" stroke-linejoin="round"/>
<path d="M37.3 21.3 Q38.235 25.865000000000002 42.8 26.8 Q38.235 27.735 37.3 32.3 Q36.364999999999995 27.735 31.799999999999997 26.8 Q36.364999999999995 25.865000000000002 37.3 21.3 Z" fill="#3be89f" stroke="#0f1a3a" stroke-width="2.1" stroke-linejoin="round"/></svg>
<div style="position:absolute;left:1459px;top:860.6px;width:416.3px;height:61px;box-sizing:border-box;border:1px solid #d1d1d1;border-bottom-color:#616161;border-radius:4px;background:#fff;z-index:2;"></div>
<div style="position:absolute;left:1830px;top:883.5px;width:1px;height:29.5px;background:#e0e0e0;z-index:3"></div>
<svg style="position:absolute;left:1844px;top:893.5px;z-index:3" width="18" height="15" viewBox="0 0 18 15" fill="none"><path d="M1 1 L16.8 7.3 L1 13.6 L3.3 7.3 Z M3.3 7.3 H9" stroke="#424242" stroke-width="1.1" stroke-linejoin="round"/></svg>
<div style="position:absolute;left:1886.8px;top:184px;width:9px;height:758px;background:#ebebeb;"></div>
<div style="position:absolute;left:1888.3px;top:195.8px;width:6px;height:506px;background:#fff;border-radius:3px"></div>
<svg style="position:absolute;left:1887.5px;top:185px;" width="8" height="7" viewBox="0 0 8 7" fill="none"><path d="M4 1 L7.3 5.8 H0.7 Z" fill="#fff"/></svg>
<svg style="position:absolute;left:1887.5px;top:934px;" width="8" height="7" viewBox="0 0 8 7" fill="none"><path d="M0.7 1 H7.3 L4 5.8 Z" fill="#fff"/></svg>
<span class="t" id="t0" style="left:97.08px;top:19.00px;font-size:16.5px;color:#7b5cf6;z-index:2;letter-spacing:0.608px;-webkit-text-stroke:0.35px #7b5cf6">Platform</span>
<span class="t" id="t1" style="left:1876.80px;top:21.00px;font-size:12.6px;color:#0b5f7d;z-index:2;-webkit-text-stroke:0.45px #0b5f7d">M</span>
<span class="t" id="t2" style="left:10.44px;top:96.00px;font-size:9.6px;color:#242424;z-index:2;letter-spacing:-0.378px">Dashboard</span>
<span class="t" id="t3" style="left:16.22px;top:170.00px;font-size:9.6px;color:#242424;z-index:2;letter-spacing:-0.285px">Tabellen</span>
<span class="t" id="t4" style="left:18.66px;top:219.00px;font-size:9.6px;color:#242424;z-index:2;letter-spacing:-0.466px">Regeln</span>
<span class="t" id="t5" style="left:12.00px;top:293.00px;font-size:9.6px;color:#242424;z-index:2;letter-spacing:-0.214px">Missionen</span>
<span class="t" id="t6" style="left:18.12px;top:342.00px;font-size:9.6px;color:#242424;z-index:2;letter-spacing:-0.327px">Alarme</span>
<span class="t" id="t7" style="left:6.56px;top:412.00px;font-size:9.6px;color:#242424;z-index:2;letter-spacing:-0.228px">Konnektoren</span>
<span class="t" id="t8" style="left:17.30px;top:916.00px;font-size:9.3px;color:#242424;z-index:2;letter-spacing:-1.047px">WE</span>
<span class="t" id="t9" style="left:22.00px;top:929.00px;font-size:9.3px;color:#242424;z-index:2;letter-spacing:-0.652px">DATA</span>
<span class="t" id="t10" style="left:18.12px;top:942.00px;font-size:9.3px;color:#242424;z-index:2;letter-spacing:-0.238px">© 2025</span>
<span class="t" id="t11" style="left:94.78px;top:79.00px;font-size:11.6px;color:#424242;z-index:2;letter-spacing:-0.704px">customer_contact_data_DEMO</span>
<span class="t" id="t12" style="left:263.00px;top:79.00px;font-size:11.6px;color:#242424;z-index:2;letter-spacing:-0.448px">customer_contact_data</span>
<span class="t" id="t13" style="left:88.90px;top:114.00px;font-size:17px;color:#242424;z-index:2;letter-spacing:0.456px;-webkit-text-stroke:0.6px #242424">customer_contact_data</span>
<span class="t" id="t14" style="left:354.56px;top:115.00px;font-size:13.6px;color:#242424;z-index:2;letter-spacing:-0.314px">Tabelle prüfen</span>
<span class="t" id="t15" style="left:481.98px;top:115.00px;font-size:13.6px;color:#242424;z-index:2;letter-spacing:-0.242px">Mission erstellen</span>
<span class="t" id="t16" style="left:626.24px;top:115.00px;font-size:13.6px;color:#242424;z-index:2;letter-spacing:-0.347px">Alarm erstellen</span>
<span class="t" id="t17" style="left:763.10px;top:115.00px;font-size:13.6px;color:#242424;z-index:2;letter-spacing:-0.397px">Mehr</span>
<span class="t" id="t18" style="left:1700.10px;top:115.00px;font-size:14.2px;color:#fff;z-index:2;letter-spacing:0.225px;-webkit-text-stroke:0.5px #fff">Neue Regel hinzufügen</span>
<span class="t" id="t19" style="left:99.76px;top:202.00px;font-size:13.9px;color:#424242;z-index:2;letter-spacing:0.157px">Übersicht</span>
<span class="t" id="t20" style="left:182.32px;top:201.00px;font-size:14px;color:#242424;z-index:2;letter-spacing:0.145px;-webkit-text-stroke:0.45px #242424">Regeln</span>
<span class="t" id="t21" style="left:250.40px;top:202.00px;font-size:13.9px;color:#424242;z-index:2;letter-spacing:-0.085px">Fehler</span>
<span class="t" id="t22" style="left:320.88px;top:202.00px;font-size:13.9px;color:#424242;z-index:2;letter-spacing:-0.081px">Beispiel</span>
<span class="t" id="t23" style="left:392.54px;top:202.00px;font-size:13.9px;color:#424242;z-index:2;letter-spacing:0.310px">Profiling</span>
<span class="t" id="t24" style="left:99.62px;top:271.00px;font-size:22.1px;color:#242424;z-index:2;letter-spacing:-0.042px">Neue Regel hinzufügen</span>
<span class="t" id="t25" style="left:99.88px;top:316.00px;font-size:13.5px;color:#242424;z-index:2;font-weight:700;letter-spacing:0.093px">customer_contact_data</span>
<span class="t" id="t72" style="left:100.20px;top:554.00px;font-size:12.7px;color:#242424;z-index:3;letter-spacing:-0.197px">Spalten customer_contact_data</span>
<span class="t" id="t73" style="left:276.40px;top:554.00px;font-size:12.7px;color:#c4314b;z-index:3">*</span>
<span class="t" id="t74" style="left:117.80px;top:582.00px;font-size:10px;color:#242424;z-index:4">1</span>
<span class="t" id="t75" style="left:135.00px;top:580.00px;font-size:11.6px;color:#242424;z-index:4;letter-spacing:-0.523px">postal_code</span>
<span class="t" id="t76" style="left:1322.10px;top:580.00px;font-size:13.2px;color:#242424;z-index:3;letter-spacing:-0.275px;-webkit-text-stroke:0.4px #242424">Kreuztabelle</span>
<span class="t" id="t77" style="left:100.20px;top:622.00px;font-size:12.7px;color:#242424;z-index:3;letter-spacing:0.082px">Bedingung</span>
<span class="t" id="t78" style="left:164.20px;top:622.00px;font-size:12.7px;color:#c4314b;z-index:3">*</span>
<span class="t" id="t79" style="left:111.10px;top:649.00px;font-size:12.7px;color:#242424;z-index:3;letter-spacing:-0.023px">erfüllt semantische Bedingung</span>
<span class="t" id="t80" style="left:99.20px;top:687.00px;font-size:12.7px;color:#242424;z-index:3;letter-spacing:-0.123px">Diese Regel verwendet Large Language Models (LLMs) mit einem benutzerdefinierten Prompt zur Analyse der Daten.</span>
<span class="t" id="t81" style="left:752.56px;top:687.00px;font-size:12.7px;color:#242424;z-index:3;font-style:italic;letter-spacing:-0.141px">Die Berechnung dieser Regel kann länger dauern - der Prozess kann beschleunigt werden, indem die Zeilen im Menü</span>
<span class="t" id="t82" style="left:99.20px;top:705.00px;font-size:12.7px;color:#242424;z-index:3;font-style:italic;letter-spacing:-0.007px">"Umfang Tabellenprüfung" weiter eingeschränkt werden.</span>
<span class="t" id="t83" style="left:100.00px;top:739.00px;font-size:12.7px;color:#242424;z-index:3;letter-spacing:0.247px">Prompt</span>
<span class="t" id="t84" style="left:144.60px;top:739.00px;font-size:12.7px;color:#c4314b;z-index:3">*</span>
<span class="t" id="t85" style="left:112.00px;top:821.00px;font-size:12.7px;color:#242424;z-index:4;font-style:italic;letter-spacing:-0.262px">Prüfe, ob der Wert in der Spalte</span>
<span class="t" id="t86" style="left:289.10px;top:822.00px;font-size:11.5px;color:#242424;z-index:4;font-family:'Liberation Mono', monospace;letter-spacing:-0.384px">postal_code</span>
<span class="t" id="t87" style="left:368.68px;top:821.00px;font-size:12.7px;color:#242424;z-index:4;font-style:italic;letter-spacing:-0.345px">für das entsprechende Land in der Spalte</span>
<span class="t" id="t88" style="left:595.32px;top:822.00px;font-size:11.5px;color:#242424;z-index:4;font-family:'Liberation Mono', monospace;letter-spacing:-0.530px">country</span>
<span class="t" id="t89" style="left:648.00px;top:821.00px;font-size:12.7px;color:#242424;z-index:4;font-style:italic;letter-spacing:-0.046px">in jeder Zeile gültig ist.</span>
<span class="t" id="t90" style="left:100.00px;top:881.00px;font-size:12.7px;color:#242424;z-index:3;letter-spacing:-0.038px">Kontextspalten</span>
<span class="t" id="t91" style="left:111.20px;top:908.00px;font-size:12.7px;color:#707070;z-index:3;letter-spacing:-0.166px">Falls relevant, Kontextspalten nutzen</span>
<span class="t" id="t92" style="left:1459.00px;top:203.00px;font-size:13.9px;color:#242424;z-index:2;letter-spacing:0.311px;-webkit-text-stroke:0.45px #242424">Qualitätsstatus</span>
<span class="t" id="t93" style="left:1599.00px;top:203.00px;font-size:13.2px;color:#424242;z-index:2;letter-spacing:-0.274px">basierend auf letzter Prüfung: vor 10 Minuten</span>
<span class="t" id="t94" style="left:1459.00px;top:268.00px;font-size:13.9px;color:#242424;z-index:2;letter-spacing:0.234px;-webkit-text-stroke:0.45px #242424">Tabellenbasierte Regeln</span>
<span class="t" id="t95" style="left:1484.44px;top:333.00px;font-size:13.9px;color:#242424;z-index:2;letter-spacing:0.285px;-webkit-text-stroke:0.45px #242424">DQ-AI Assistant</span>
<span class="t" id="t96" style="left:1592.20px;top:625.00px;font-size:12.5px;color:#424242;z-index:2;letter-spacing:-0.020px">Holen Sie sich Hilfe bei der</span>
<span class="t" id="t97" style="left:1576.32px;top:643.00px;font-size:12.5px;color:#424242;z-index:2;letter-spacing:-0.054px">Regelgenerierung und fragen Sie</span>
<span class="t" id="t98" style="left:1619.00px;top:661.00px;font-size:12.5px;color:#424242;z-index:2;letter-spacing:-0.134px">nach Ihren Daten.</span>
<span class="t" id="t99" style="left:1472.32px;top:873.00px;font-size:12.5px;color:#707070;z-index:3;letter-spacing:-0.202px">Fragen Sie nach Ihren Daten...</span>
<div style="position:absolute;left:100px;top:347px;width:1305px;height:168px;overflow:hidden;z-index:3"><span class="t" id="t26" style="left:-12.80px;top:7.00px;font-size:12.7px;color:#242424;z-index:3;font-weight:700;letter-spacing:-0.302px">last_name</span><span class="t" id="t27" style="left:137.12px;top:7.00px;font-size:12.7px;color:#242424;z-index:3;font-weight:700;letter-spacing:-0.272px">academic_title</span><span class="t" id="t28" style="left:285.88px;top:7.00px;font-size:12.7px;color:#242424;z-index:3;font-weight:700;letter-spacing:-0.448px">street_address</span><span class="t" id="t29" style="left:435.44px;top:7.00px;font-size:12.7px;color:#242424;z-index:3;font-weight:700;letter-spacing:-0.211px">city</span><span class="t" id="t30" style="left:609.88px;top:7.00px;font-size:12.7px;color:#242424;z-index:3;font-weight:700;letter-spacing:-0.363px">postal_code</span><span class="t" id="t31" style="left:733.88px;top:7.00px;font-size:12.7px;color:#242424;z-index:3;font-weight:700;letter-spacing:-0.048px">country</span><span class="t" id="t32" style="left:883.44px;top:7.00px;font-size:12.7px;color:#242424;z-index:3;font-weight:700;letter-spacing:-0.218px">phone_number</span><span class="t" id="t33" style="left:1032.88px;top:7.00px;font-size:12.7px;color:#242424;z-index:3;font-weight:700;letter-spacing:-0.258px">medtech_id</span><span class="t" id="t34" style="left:1182.44px;top:7.00px;font-size:12.7px;color:#242424;z-index:3;font-weight:700;letter-spacing:-0.053px">email</span><span class="t" id="t35" style="left:590.50px;top:8.00px;font-size:10px;color:#fff;z-index:3;font-weight:700">1</span><span class="t" id="t36" style="left:-7.30px;top:28.00px;font-size:11.6px;color:#424242;z-index:3;letter-spacing:0.137px">string</span><span class="t" id="t37" style="left:142.22px;top:28.00px;font-size:11.6px;color:#424242;z-index:3;letter-spacing:-0.043px">string</span><span class="t" id="t38" style="left:291.78px;top:28.00px;font-size:11.6px;color:#424242;z-index:3;letter-spacing:-0.043px">string</span><span class="t" id="t39" style="left:441.34px;top:28.00px;font-size:11.6px;color:#424242;z-index:3;letter-spacing:-0.043px">string</span><span class="t" id="t40" style="left:590.10px;top:28.00px;font-size:11.6px;color:#424242;z-index:3;letter-spacing:0.137px">string</span><span class="t" id="t41" style="left:739.78px;top:28.00px;font-size:11.6px;color:#424242;z-index:3;letter-spacing:-0.043px">string</span><span class="t" id="t42" style="left:889.34px;top:28.00px;font-size:11.6px;color:#424242;z-index:3;letter-spacing:-0.043px">string</span><span class="t" id="t43" style="left:1038.88px;top:28.00px;font-size:11.6px;color:#424242;z-index:3;letter-spacing:-0.197px">int64</span><span class="t" id="t44" style="left:1188.34px;top:28.00px;font-size:11.6px;color:#424242;z-index:3;letter-spacing:-0.043px">string</span><span class="t" id="t45" style="left:-12.80px;top:62.00px;font-size:12.7px;color:#242424;z-index:3;letter-spacing:0.850px">west</span><span class="t" id="t46" style="left:137.10px;top:62.00px;font-size:12.7px;color:#616161;z-index:3;font-style:italic;letter-spacing:-0.502px">NULL</span><span class="t" id="t47" style="left:286.68px;top:62.00px;font-size:12.7px;color:#242424;z-index:3;letter-spacing:-0.260px">05510 Collins Locks A...</span><span class="t" id="t48" style="left:436.24px;top:62.00px;font-size:12.7px;color:#242424;z-index:3;letter-spacing:-0.218px">Wendyland</span><span class="t" id="t49" style="left:585.00px;top:62.00px;font-size:12.7px;color:#242424;z-index:3;letter-spacing:-0.507px">9454</span><span class="t" id="t50" style="left:733.88px;top:62.00px;font-size:12.7px;color:#242424;z-index:3;letter-spacing:-0.324px">Germany</span><span class="t" id="t51" style="left:883.44px;top:62.00px;font-size:12.7px;color:#242424;z-index:3;letter-spacing:-0.313px">051916023631</span><span class="t" id="t52" style="left:1032.88px;top:62.00px;font-size:12.7px;color:#242424;z-index:3;letter-spacing:-0.159px">110000212487</span><span class="t" id="t53" style="left:1182.44px;top:62.00px;font-size:12.7px;color:#242424;z-index:3;letter-spacing:-0.055px">-.west@hotmail.com</span><span class="t" id="t54" style="left:-12.80px;top:103.00px;font-size:12.7px;color:#242424;z-index:3;letter-spacing:0.438px">kelly</span><span class="t" id="t55" style="left:137.10px;top:103.00px;font-size:12.7px;color:#616161;z-index:3;font-style:italic;letter-spacing:-0.502px">NULL</span><span class="t" id="t56" style="left:285.88px;top:103.00px;font-size:12.7px;color:#242424;z-index:3;letter-spacing:-0.282px">56088 Krueger Run</span><span class="t" id="t57" style="left:434.64px;top:103.00px;font-size:12.7px;color:#242424;z-index:3;letter-spacing:-0.098px">New Sandratown</span><span class="t" id="t58" style="left:585.00px;top:103.00px;font-size:12.7px;color:#242424;z-index:3;letter-spacing:-0.207px">65480</span><span class="t" id="t59" style="left:733.88px;top:103.00px;font-size:12.7px;color:#242424;z-index:3;letter-spacing:-0.902px">DE</span><span class="t" id="t60" style="left:884.22px;top:103.00px;font-size:12.7px;color:#616161;z-index:3;font-style:italic;letter-spacing:-0.802px">NULL</span><span class="t" id="t61" style="left:1032.88px;top:103.00px;font-size:12.7px;color:#242424;z-index:3;letter-spacing:-0.226px">110000218361</span><span class="t" id="t62" style="left:1182.60px;top:103.00px;font-size:12.7px;color:#242424;z-index:3;letter-spacing:-0.316px">achim.kelly@gmail.com</span><span class="t" id="t63" style="left:-12.80px;top:143.00px;font-size:12.7px;color:#242424;z-index:3;letter-spacing:0.255px">arellano</span><span class="t" id="t64" style="left:137.10px;top:143.00px;font-size:12.7px;color:#616161;z-index:3;font-style:italic;letter-spacing:-0.502px">NULL</span><span class="t" id="t65" style="left:285.88px;top:143.00px;font-size:12.7px;color:#242424;z-index:3;letter-spacing:-0.363px">9986 Erica Falls Suite 3...</span><span class="t" id="t66" style="left:434.64px;top:143.00px;font-size:12.7px;color:#242424;z-index:3;letter-spacing:-0.366px">Lake Kathy</span><span class="t" id="t67" style="left:585.00px;top:143.00px;font-size:12.7px;color:#242424;z-index:3;letter-spacing:-0.260px">31242</span><span class="t" id="t68" style="left:733.88px;top:143.00px;font-size:12.7px;color:#242424;z-index:3;letter-spacing:-0.902px">DE</span><span class="t" id="t69" style="left:884.22px;top:143.00px;font-size:12.7px;color:#616161;z-index:3;font-style:italic;letter-spacing:-0.802px">NULL</span><span class="t" id="t70" style="left:1032.88px;top:143.00px;font-size:12.7px;color:#242424;z-index:3;letter-spacing:-0.159px">110000187656</span><span class="t" id="t71" style="left:1182.60px;top:143.00px;font-size:12.7px;color:#242424;z-index:3;letter-spacing:-0.328px">bernhard.arelano@gmail.com</span></div>
</body></html>
